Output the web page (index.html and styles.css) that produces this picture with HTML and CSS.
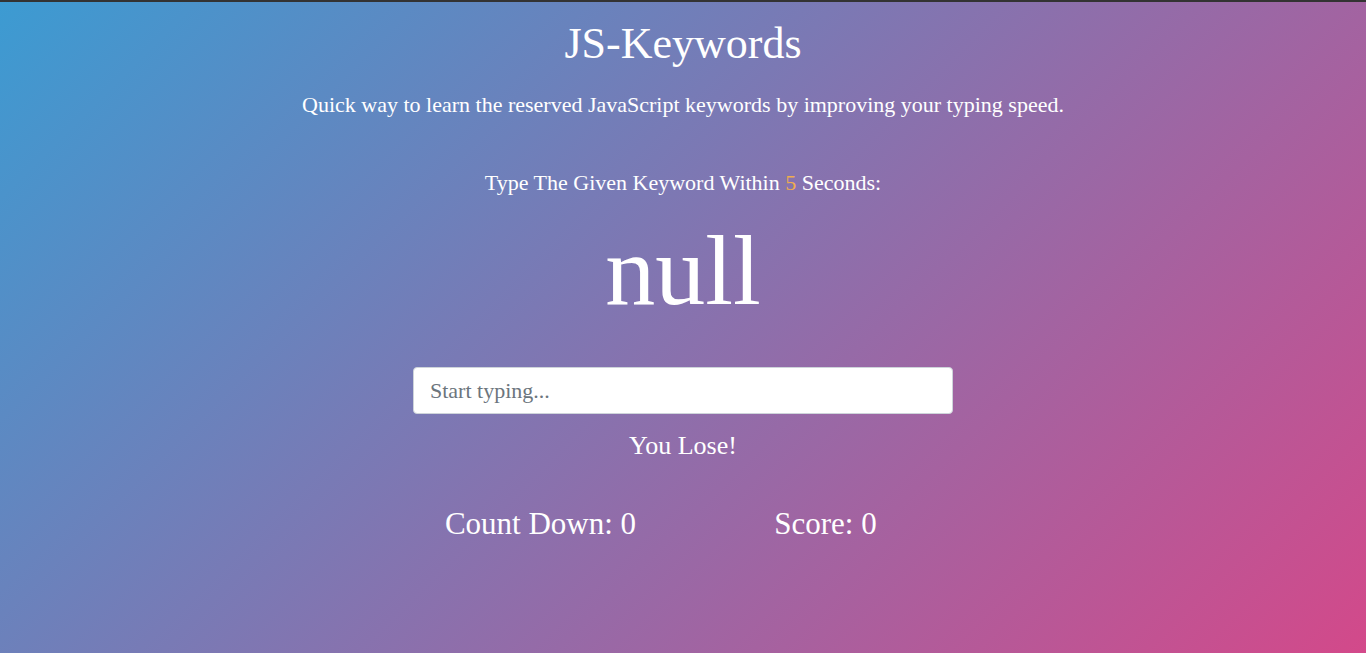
FILE: index.html
```html
<!DOCTYPE html>
<html lang="en">
<head>
<meta charset="utf-8">
<title>JS-Keywords</title>
<link rel="stylesheet" href="styles.css">
</head>
<body>
<main class="page">
  <header class="intro">
    <h1 class="title">JS-Keywords</h1>
    <p class="lead">Quick way to learn the reserved JavaScript keywords by improving your typing speed.</p>
  </header>
  <section class="game">
    <p class="prompt">Type The Given Keyword Within <span class="seconds">5</span> Seconds:</p>
    <h2 class="word">null</h2>
    <div class="field">
      <input class="typing" type="text" placeholder="Start typing...">
    </div>
    <p class="message">You Lose!</p>
    <div class="stats">
      <h3 class="stat">Count Down: <span>0</span></h3>
      <h3 class="stat">Score: <span>0</span></h3>
    </div>
  </section>
</main>
</body>
</html>
```

FILE: styles.css
```css
* { box-sizing: border-box; }
html, body { margin: 0; padding: 0; height: 100%; }
body {
  border-top: 2px solid #333;
  background: linear-gradient(135deg, #3c9bd2 0%, #d3498a 100%);
  color: #fff;
  font-family: "Liberation Serif", "DejaVu Serif", serif;
  min-height: 653px;
}
.page { display: flex; flex-direction: column; align-items: center; }
.intro, .game { display: flex; flex-direction: column; align-items: center; width: 100%; }
.title {
  margin: 18px 0 0;
  font-size: 44px;
  line-height: 48px;
  font-weight: 400;
}
.lead {
  margin: 22px 0 0;
  font-size: 22px;
  line-height: 30px;
}
.prompt {
  margin: 48px 0 0;
  font-size: 22px;
  line-height: 30px;
}
.seconds { color: #f0ad4e; }
.word {
  margin: 13px 0 0;
  font-size: 100px;
  line-height: 120px;
  font-weight: 400;
}
.field { margin-top: 36px; width: 540px; }
.typing {
  display: block;
  width: 100%;
  height: 47px;
  padding: 8px 16px;
  border: 1px solid #ced4da;
  border-radius: 4px;
  background: #fff;
  font-family: inherit;
  font-size: 22px;
  color: #495057;
  outline: none;
}
.typing::placeholder { color: #6c757d; }
.message {
  margin: 17px 0 0;
  font-size: 26px;
  line-height: 30px;
}
.stats {
  margin-top: 43px;
  width: 570px;
  display: grid;
  grid-template-columns: 1fr 1fr;
}
.stat {
  margin: 0;
  text-align: center;
  font-size: 31px;
  line-height: 40px;
  font-weight: 400;
}
```
